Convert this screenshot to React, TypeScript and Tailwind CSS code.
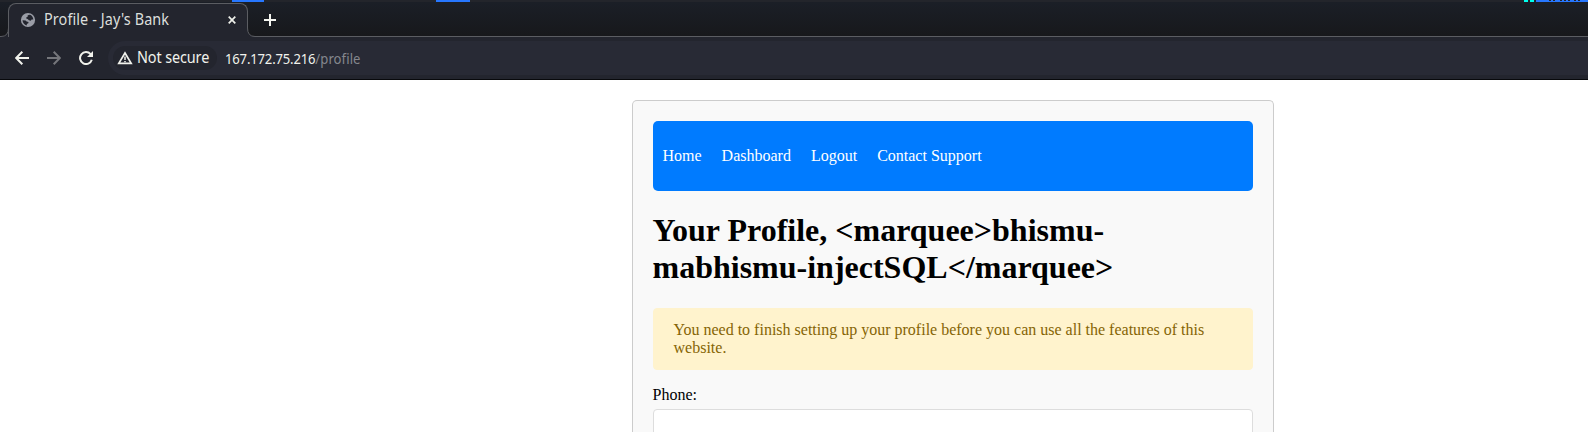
const specks = [1549, 1553, 1560, 1564, 1568, 1574, 1578];

function DesktopPanel() {
  return (
    <div className="relative h-[2px] shrink-0 bg-[#23252b]">
      <i className="absolute left-[232px] h-[2px] w-8 bg-[#2777ff]" />
      <i className="absolute left-[436px] h-[2px] w-[34px] bg-[#2777ff]" />
      <i className="absolute left-[1524px] h-[2px] w-1 bg-[#0fe]" />
      <i className="absolute left-[1530px] h-[2px] w-1 bg-[#0fe]" />
      <i className="absolute left-[1536px] h-[2px] w-[52px] bg-[#2777ff]" />
      {specks.map((x) => (
        <i key={x} className="absolute h-px w-[2px] bg-[#23252b]" style={{ left: x }} />
      ))}
    </div>
  );
}

function Globe() {
  return (
    <svg width="16" height="16" viewBox="0 0 16 16" className="shrink-0">
      <circle cx="8" cy="8" r="7.100" fill="#9a9da6" />
      <path
        d="M7.600 3.400C9.300 2.500 10.500 2.700 11.400 3.500C12.700 4.700 13.200 6.300 13.300 7.600L11.600 7.500L10.800 8.700L9 8.300L7.600 7L6.200 6.500L6.400 5.300L7.700 4.700Z"
        fill="#23252e"
      />
      <path
        d="M2.500 8.300L5.600 8.400L6.600 9.600L8.500 10L8.300 11.200L6.900 11.900L6.700 13.500C4.300 12.800 2.600 10.900 2.500 8.300Z"
        fill="#23252e"
      />
    </svg>
  );
}

function TabStrip() {
  return (
    <div className="flex h-[35px] bg-linear-to-b from-[#1b1f27] to-[#17181b]">
      <div className="flex w-2 items-end">
        <svg width="9" height="9" viewBox="0 0 9 9" className="shrink-0">
          <path d="M9 0v9H0V8.500H1.500Q8.500 8.500 8.500 0z" fill="#23252e" />
          <path d="M0 8.500H1Q8.500 8.500 8.500 0" fill="none" stroke="#5b5d62" />
        </svg>
      </div>
      <div className="mt-px flex w-[240px] items-center rounded-t-[8px] border border-b-0 border-[#5b5d62] bg-[#23252e] pb-px pl-[11px]">
        <Globe />
        <span className="-mt-0.5 ml-2 w-[184px] shrink-0 origin-left scale-x-[0.93] whitespace-nowrap text-[15.5px] leading-[20px] tracking-[0.1px] text-[#dcdfdc]">
          Profile - Jay's Bank
        </span>
        <svg width="8" height="8" viewBox="0 0 8 8" className="shrink-0">
          <path d="M.7.7l6.600 6.600M7.300.7L.7 7.300" stroke="#eef0ea" strokeWidth="1.700" />
        </svg>
      </div>
      <div className="flex flex-1 border-b border-[#5b5d62]">
        <svg width="9" height="9" viewBox="0 0 9 9" className="-mb-px -ml-px self-end">
          <path d="M0 0v9H9V8.500H8Q.5 8.500 .5 0z" fill="#23252e" />
          <path d="M.5 0Q.5 8.500 8 8.500H9" fill="none" stroke="#5b5d62" />
        </svg>
        <svg width="12" height="12" viewBox="0 0 12 12" className="mt-3 ml-2">
          <path d="M6 0v12M0 6h12" stroke="#f4f5f0" strokeWidth="2" />
        </svg>
      </div>
    </div>
  );
}

function Toolbar() {
  return (
    <div className="flex h-[43px] items-center border-b border-[#08090c] bg-[#23252e] text-[#f1f2ec]">
      <svg width="14" height="14" viewBox="0 0 14 14" className="ml-[15px]" fill="none" stroke="currentColor" strokeWidth="2">
        <path d="M14 7H1.500M7.300 .8L1.200 7l6.100 6.200" />
      </svg>
      <svg width="14" height="14" viewBox="0 0 14 14" className="ml-[18px] text-[#75767b]" fill="none" stroke="currentColor" strokeWidth="2">
        <path d="M0 7h12.500M6.700 .8L12.800 7l-6.100 6.200" />
      </svg>
      <svg width="15" height="14" viewBox="0 0 15 14" className="ml-[18px]" fill="none" stroke="currentColor" strokeWidth="2">
        <path d="M11.600 3.100A6 6 0 1 0 12.800 8.800" />
        <path d="M14 0v6H8z" fill="currentColor" stroke="none" />
      </svg>
      <div className="ml-[14px] flex h-[34px] flex-1 items-center rounded-l-[17px] bg-[#282a35] pl-[5px]">
        <div className="flex h-6 w-[104px] items-center rounded-full bg-[#23252e] pl-[4px]">
          <svg width="16" height="14" viewBox="0 0 16 14" className="shrink-0">
            <path d="M8 2L14.200 12.300H1.800z" fill="none" stroke="currentColor" strokeWidth="1.700" />
            <path d="M8 5.500v3.500M8 9.900v1.400" stroke="currentColor" strokeWidth="1.500" />
          </svg>
          <span className="-mt-0.5 ml-1 w-20 origin-left scale-x-[0.93] whitespace-nowrap text-[15.5px] leading-5 tracking-[-0.12px]">
            Not secure
          </span>
        </div>
        <span className="-mt-px ml-2 origin-left scale-x-[0.9] whitespace-nowrap text-[14.5px] leading-5 tracking-[-0.18px]">
          167.172.75.216<span className="tracking-[0.1px] text-[#85878d]">/profile</span>
        </span>
      </div>
    </div>
  );
}

export default function App() {
  return (
    <div className="flex h-[432px] flex-col overflow-hidden bg-white">
      <header className="shrink-0 font-['Noto_Sans',sans-serif]">
        <DesktopPanel />
        <TabStrip />
        <Toolbar />
      </header>
      <main className="mt-5 ml-[631.5px] w-[642px] flex-1 shrink-0 rounded-t-[5px] border border-b-0 border-[#ccc] bg-[#f9f9f9] p-5 font-['Liberation_Serif',serif] text-[16px] leading-[18px] text-black">
        <nav className="flex h-[70px] items-center gap-5 rounded-[5px] bg-[#007bff] px-[10px] text-white">
          <a>Home</a>
          <a>Dashboard</a>
          <a>Logout</a>
          <a>Contact Support</a>
        </nav>
        <h1 className="mt-[21px] text-[32px] font-bold leading-[37px]">
          Your Profile, &lt;marquee&gt;bhismu-
          <br />
          mabhismu-injectSQL&lt;/marquee&gt;
        </h1>
        <div className="mt-[22px] rounded-[4px] border border-[#fff3cd] bg-[#fff3cd] px-5 py-3 text-[#856404]">
          You need to finish setting up your profile before you can use all the features of this website.
        </div>
        <label className="mt-4 block">Phone:</label>
        <input className="mt-[5px] block h-10 w-full rounded-[4px] border border-[#ddd] bg-white px-2" />
      </main>
    </div>
  );
}
